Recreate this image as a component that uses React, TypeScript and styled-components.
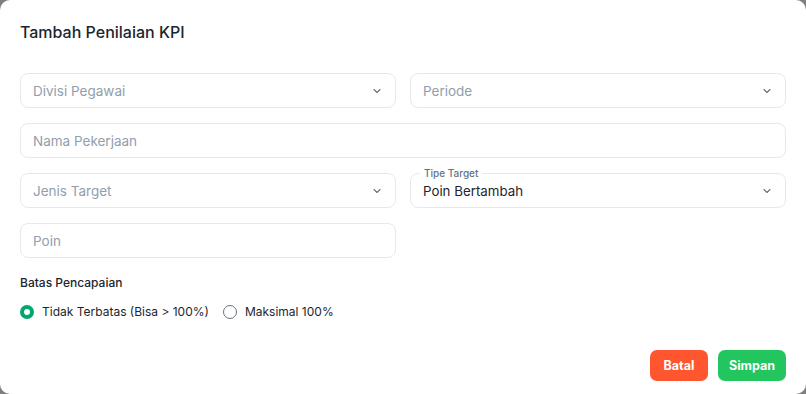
import React from 'react'
import styled, { createGlobalStyle } from 'styled-components'

const GlobalStyle = createGlobalStyle`
  * { box-sizing: border-box; }
  html, body { margin: 0; padding: 0; background: #7f7f7f; }
  body { font-family: 'Inter', 'Noto Sans', sans-serif; }
`

const Dialog = styled.div`
  width: 806px;
  height: 394px;
  background: #fff;
  border-radius: 10px;
  padding: 20px 20px 13px 20px;
  display: flex;
  flex-direction: column;
`

const Title = styled.h2`
  margin: 0 0 29px 0;
  font-size: 16px;
  font-weight: 500;
  color: #1c252e;
  line-height: 24px;
`

const Grid = styled.div`
  display: grid;
  grid-template-columns: 1fr 1fr;
  column-gap: 14px;
  row-gap: 15px;
`

const Field = styled.div<{ $full?: boolean }>`
  position: relative;
  grid-column: ${(p) => (p.$full ? '1 / span 2' : 'auto')};
  height: 35px;
  border: 1px solid #e6e9ec;
  border-radius: 8px;
  display: flex;
  align-items: center;
  padding: 0 12px 0 12px;
`

const Value = styled.span<{ $placeholder?: boolean }>`
  flex: 1;
  font-size: ${(p) => (p.$placeholder ? '13.5px' : '13.3px')};
  color: ${(p) => (p.$placeholder ? '#919eab' : '#1c252e')};
`

const FloatLabel = styled.span`
  position: absolute;
  top: -7px;
  left: 9px;
  padding: 0 4px;
  background: #fff;
  font-size: 10px;
  font-weight: 500;
  line-height: 12px;
  color: #637381;
`

const Chevron = () => (
  <svg width="12" height="12" viewBox="0 0 24 24" fill="none" stroke="#637381" strokeWidth="2.2" strokeLinecap="round" strokeLinejoin="round">
    <path d="M6 9l6 6 6-6" />
  </svg>
)

const SectionLabel = styled.div`
  margin-top: 17px;
  font-size: 12px;
  font-weight: 500;
  color: #1c252e;
`

const RadioRow = styled.div`
  display: flex;
  align-items: center;
  gap: 14px;
  margin-top: 14px;
`

const RadioItem = styled.label`
  display: flex;
  align-items: center;
  gap: 8px;
  font-size: 12px;
  color: #1c252e;
`

const RadioDot = styled.span<{ $checked?: boolean }>`
  width: 14px;
  height: 14px;
  border-radius: 50%;
  border: ${(p) => (p.$checked ? '4px solid #00a76f' : '1.5px solid #637381')};
  background: #fff;
`

const Footer = styled.div`
  margin-top: auto;
  display: flex;
  justify-content: flex-end;
  gap: 10px;
`

const Button = styled.button<{ $tone: 'danger' | 'success' }>`
  height: 31px;
  min-width: 58px;
  padding: 0 11px;
  border: none;
  border-radius: 7px;
  background: ${(p) => (p.$tone === 'danger' ? '#ff5630' : '#22c55e')};
  color: #fff;
  font-family: inherit;
  font-size: 12.5px;
  font-weight: 700;
`

export default function App() {
  return (
    <>
      <GlobalStyle />
      <Dialog>
        <Title>Tambah Penilaian KPI</Title>
        <Grid>
          <Field>
            <Value $placeholder>Divisi Pegawai</Value>
            <Chevron />
          </Field>
          <Field>
            <Value $placeholder>Periode</Value>
            <Chevron />
          </Field>
          <Field $full>
            <Value $placeholder>Nama Pekerjaan</Value>
          </Field>
          <Field>
            <Value $placeholder>Jenis Target</Value>
            <Chevron />
          </Field>
          <Field>
            <FloatLabel>Tipe Target</FloatLabel>
            <Value>Poin Bertambah</Value>
            <Chevron />
          </Field>
          <Field>
            <Value $placeholder>Poin</Value>
          </Field>
        </Grid>
        <SectionLabel>Batas Pencapaian</SectionLabel>
        <RadioRow>
          <RadioItem>
            <RadioDot $checked />
            Tidak Terbatas (Bisa &gt; 100%)
          </RadioItem>
          <RadioItem>
            <RadioDot />
            Maksimal 100%
          </RadioItem>
        </RadioRow>
        <Footer>
          <Button $tone="danger">Batal</Button>
          <Button $tone="success">Simpan</Button>
        </Footer>
      </Dialog>
    </>
  )
}
